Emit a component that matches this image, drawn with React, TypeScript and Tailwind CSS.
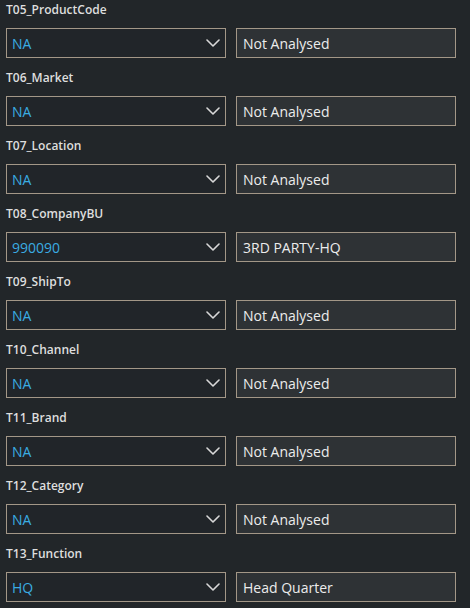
const rows = [
  { label: 'T05_ProductCode', code: 'NA', desc: 'Not Analysed' },
  { label: 'T06_Market', code: 'NA', desc: 'Not Analysed' },
  { label: 'T07_Location', code: 'NA', desc: 'Not Analysed' },
  { label: 'T08_CompanyBU', code: '990090', desc: '3RD PARTY-HQ' },
  { label: 'T09_ShipTo', code: 'NA', desc: 'Not Analysed' },
  { label: 'T10_Channel', code: 'NA', desc: 'Not Analysed' },
  { label: 'T11_Brand', code: 'NA', desc: 'Not Analysed' },
  { label: 'T12_Category', code: 'NA', desc: 'Not Analysed' },
  { label: 'T13_Function', code: 'HQ', desc: 'Head Quarter' },
];

function Chevron() {
  return (
    <svg width="14" height="8" viewBox="0 0 14 8" fill="none" className="text-[#d8d8d8]">
      <path d="M1 1l6 6 6-6" stroke="currentColor" strokeWidth="1.6" strokeLinecap="round" strokeLinejoin="round" />
    </svg>
  );
}

function Row({ label, code, desc }: { label: string; code: string; desc: string }) {
  return (
    <div className="flex flex-col mb-[10px]">
      <div className="h-[28px] pt-[2px] text-[12px] leading-[16px] font-semibold text-[#dedede]">{label}</div>
      <div className="flex gap-[10px]">
        <div className="w-[220px] h-[30px] flex items-center justify-between border border-[#a39787] bg-[#212529] pl-[5px] pr-[5px]">
          <span className="text-[14px] text-[#3aace2]">{code}</span>
          <Chevron />
        </div>
        <div className="w-[220px] h-[30px] flex items-center border border-[#a39787] bg-[#2e3235] pl-[6px]">
          <span className="text-[14px] text-[#ececec]">{desc}</span>
        </div>
      </div>
    </div>
  );
}

export default function App() {
  return (
    <div className="w-[470px] h-[608px] overflow-hidden bg-[#222629] pl-[6px] font-['Open_Sans',sans-serif]">
      {rows.map((r) => (
        <Row key={r.label} {...r} />
      ))}
    </div>
  );
}
